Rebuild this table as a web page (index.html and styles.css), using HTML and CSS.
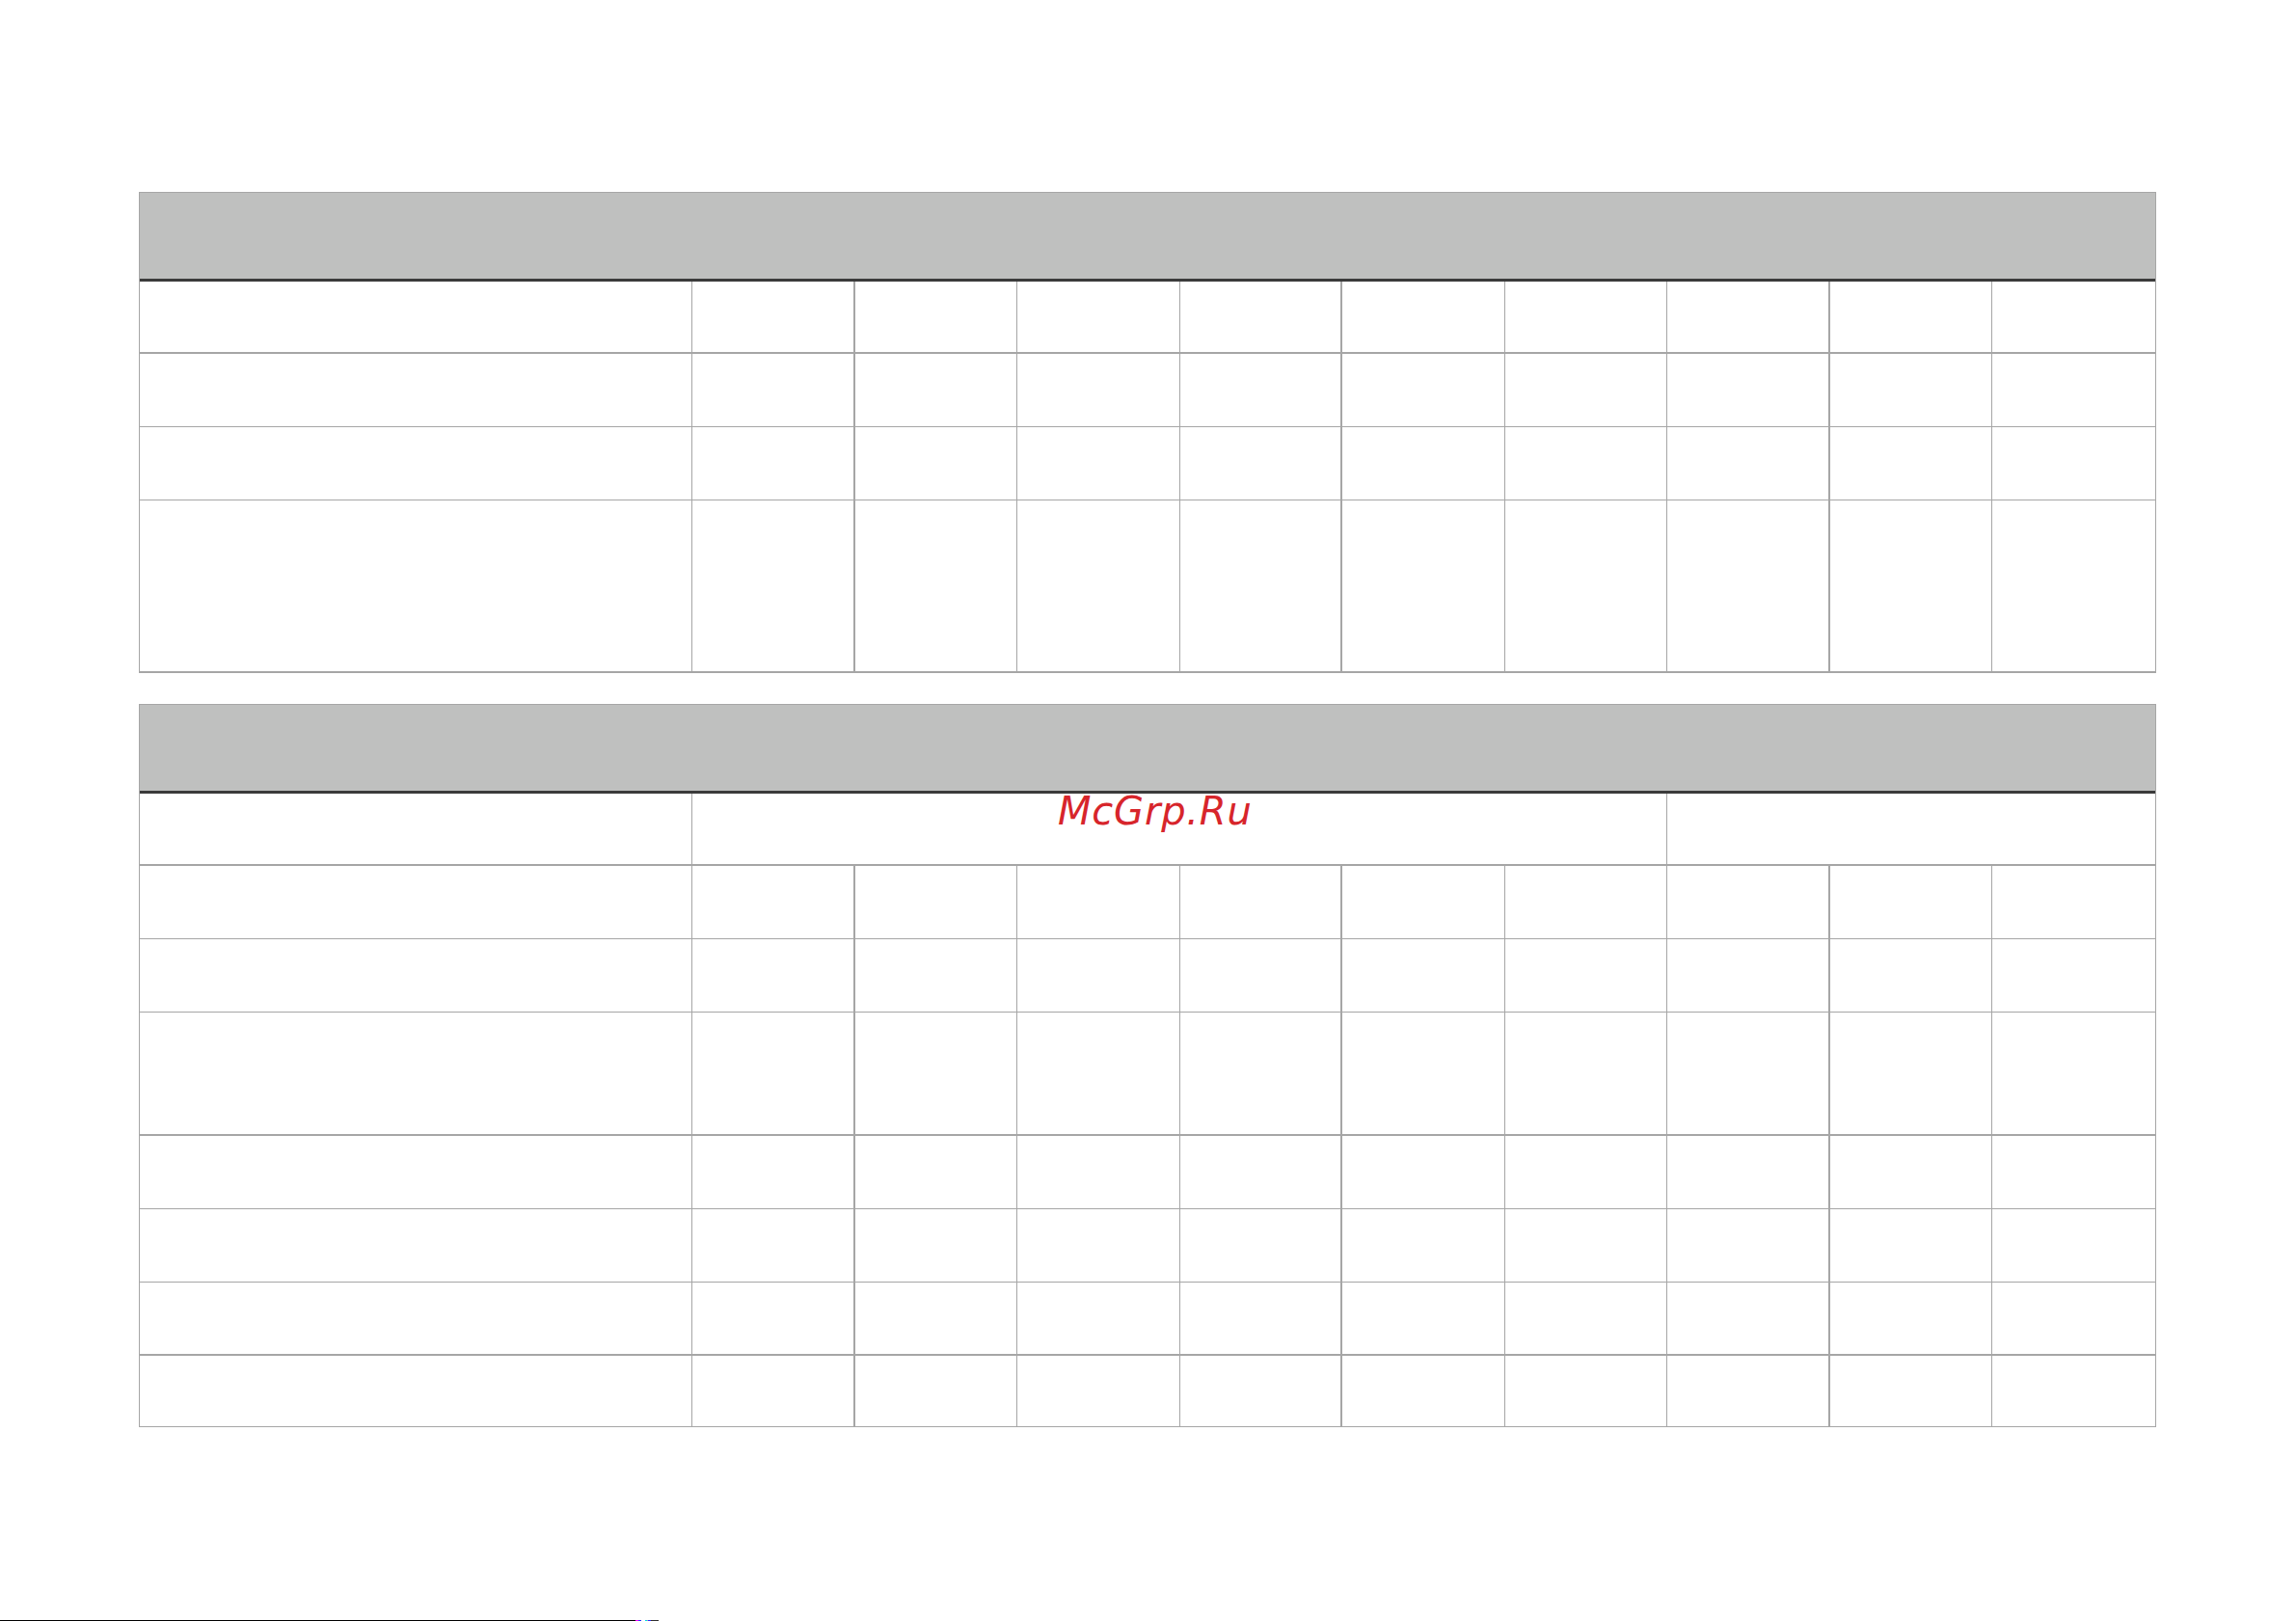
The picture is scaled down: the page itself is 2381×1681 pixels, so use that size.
FILE: index.html
```html
<!DOCTYPE html>
<html lang="ru">
<head>
<meta charset="utf-8">
<title>Таблица</title>
<link rel="stylesheet" href="styles.css">
</head>
<body>
<main class="page">
  <section class="sheet">
    <div class="band"></div>
    <div class="row thick h75"><div class="c"></div><div class="c tr"></div><div class="c"></div><div class="c"></div><div class="c tr"></div><div class="c"></div><div class="c"></div><div class="c tr"></div><div class="c"></div><div class="c last"></div></div>
    <div class="row h76"><div class="c"></div><div class="c tr"></div><div class="c"></div><div class="c"></div><div class="c tr"></div><div class="c"></div><div class="c"></div><div class="c tr"></div><div class="c"></div><div class="c last"></div></div>
    <div class="row h76"><div class="c"></div><div class="c tr"></div><div class="c"></div><div class="c"></div><div class="c tr"></div><div class="c"></div><div class="c"></div><div class="c tr"></div><div class="c"></div><div class="c last"></div></div>
    <div class="row thick h179"><div class="c"></div><div class="c tr"></div><div class="c"></div><div class="c"></div><div class="c tr"></div><div class="c"></div><div class="c"></div><div class="c tr"></div><div class="c"></div><div class="c last"></div></div>
  </section>

  <section class="sheet second">
    <div class="band"></div>
    <div class="row thick h75"><div class="c"></div><div class="c span6"></div><div class="c span3 last"></div></div>
    <div class="row h76"><div class="c"></div><div class="c tr"></div><div class="c"></div><div class="c"></div><div class="c tr"></div><div class="c"></div><div class="c"></div><div class="c tr"></div><div class="c"></div><div class="c last"></div></div>
    <div class="row h76"><div class="c"></div><div class="c tr"></div><div class="c"></div><div class="c"></div><div class="c tr"></div><div class="c"></div><div class="c"></div><div class="c tr"></div><div class="c"></div><div class="c last"></div></div>
    <div class="row thick h128"><div class="c"></div><div class="c tr"></div><div class="c"></div><div class="c"></div><div class="c tr"></div><div class="c"></div><div class="c"></div><div class="c tr"></div><div class="c"></div><div class="c last"></div></div>
    <div class="row h76"><div class="c"></div><div class="c tr"></div><div class="c"></div><div class="c"></div><div class="c tr"></div><div class="c"></div><div class="c"></div><div class="c tr"></div><div class="c"></div><div class="c last"></div></div>
    <div class="row h76"><div class="c"></div><div class="c tr"></div><div class="c"></div><div class="c"></div><div class="c tr"></div><div class="c"></div><div class="c"></div><div class="c tr"></div><div class="c"></div><div class="c last"></div></div>
    <div class="row thick h76"><div class="c"></div><div class="c tr"></div><div class="c"></div><div class="c"></div><div class="c tr"></div><div class="c"></div><div class="c"></div><div class="c tr"></div><div class="c"></div><div class="c last"></div></div>
    <div class="row h74"><div class="c"></div><div class="c tr"></div><div class="c"></div><div class="c"></div><div class="c tr"></div><div class="c"></div><div class="c"></div><div class="c tr"></div><div class="c"></div><div class="c last"></div></div>
  </section>
</main>

<div class="watermark">McGrp.Ru</div>

<footer class="footer">
  <span class="rule"></span>
  <span class="px m"></span><span class="px b"></span><span class="px gap"></span><span class="px c"></span><span class="px b"></span><span class="px k"></span>
</footer>
</body>
</html>
```

FILE: styles.css
```css
html, body {
  margin: 0;
  padding: 0;
  background: #ffffff;
}

body {
  height: 1681px;
  display: flex;
  flex-direction: column;
  overflow: hidden;
  font-family: "DejaVu Sans", "Liberation Sans", sans-serif;
  position: relative;
}

.page {
  padding: 199px 0 0 144px;
  display: flex;
  flex-direction: column;
}

.sheet {
  width: 2092px;
  box-sizing: border-box;
  border-left: 1px solid #a6a6a6;
  border-right: 1px solid #a6a6a6;
}

.sheet.second {
  margin-top: 32px;
}

.band {
  height: 93px;
  box-sizing: border-box;
  background: #bfc0bf;
  border-top: 1px solid #a6a6a6;
  border-bottom: 3px solid #3b3b3b;
}

.row {
  display: grid;
  grid-template-columns: 573px repeat(9, 1fr);
  box-sizing: border-box;
  border-bottom: 1px solid #a6a6a6;
}

.row.thick {
  border-bottom-width: 2px;
}

.h74 { height: 74px; }
.h75 { height: 75px; }
.h76 { height: 76px; }
.h128 { height: 128px; }
.h179 { height: 179px; }

.c {
  box-sizing: border-box;
  border-right: 1px solid #a6a6a6;
}

.c.tr {
  border-right-width: 2px;
}

.c.last {
  border-right: none;
}

.span6 { grid-column: span 6; }
.span3 { grid-column: span 3; }

.watermark {
  position: absolute;
  left: 1097px;
  top: 818px;
  font-family: "DejaVu Sans", sans-serif;
  font-style: italic;
  font-size: 40px;
  line-height: 47px;
  letter-spacing: 0.8px;
  color: #d7252b;
}

.footer {
  margin-top: auto;
  display: flex;
  align-items: flex-end;
  height: 1px;
}

.rule {
  width: 659px;
  height: 1px;
  background: #000000;
}

.px {
  width: 3px;
  height: 1px;
}

.px.m { background: #ff00ff; }
.px.b { background: #2a2aff; }
.px.c { background: #00e0e0; }
.px.k { background: #303030; width: 8px; }
.px.gap { background: transparent; width: 4px; }
```
